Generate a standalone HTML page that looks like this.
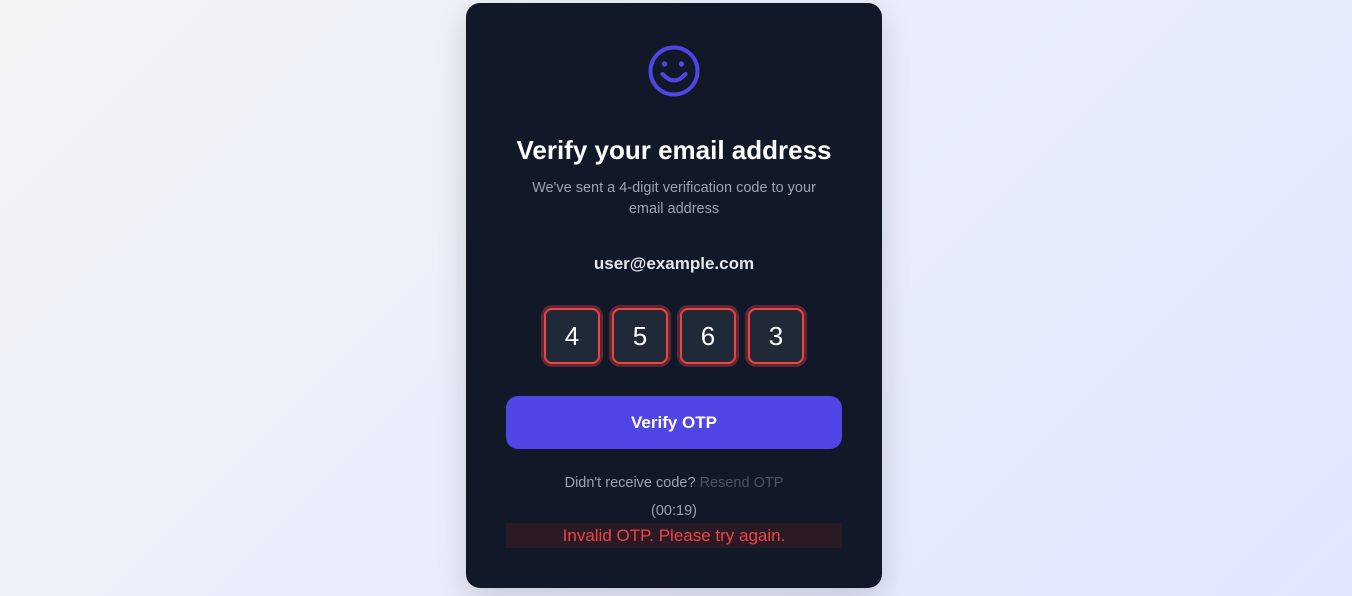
<!DOCTYPE html>
<html><head><style>
html,body{margin:0;padding:0}
body{width:1352px;height:596px;background:linear-gradient(135deg,#f3f4f6 0%,#e0e7ff 100%);font-family:"Liberation Sans",sans-serif;position:relative;overflow:hidden}
.card{position:absolute;left:466px;top:3px;width:416px;height:585px;background:#111827;border-radius:14px;box-shadow:0 10px 30px rgba(0,0,0,.15)}
.c{position:absolute;left:0;width:416px;text-align:center}
.box{position:absolute;top:308px;width:52px;height:52px;border:2px solid #ef4444;border-radius:8px;background:#1f2937;box-shadow:0 0 0 3px rgba(239,68,68,.35);color:#fff;font-size:26px;line-height:52px;text-align:center}
</style></head><body>
<div class="card">
<svg style="position:absolute;left:180px;top:40px" width="56" height="56" viewBox="0 0 56 56"><circle cx="28" cy="28" r="23.5" fill="none" stroke="#4f46e5" stroke-width="4"/><circle cx="18.5" cy="21" r="2.7" fill="#4f46e5"/><circle cx="35.5" cy="21" r="2.7" fill="#4f46e5"/><path d="M16.5 31q11.5 13 23 0" fill="none" stroke="#4f46e5" stroke-width="4" stroke-linecap="round"/></svg>
<div class="c" style="top:132px;font-size:26px;font-weight:bold;color:#fff">Verify your email address</div>
<div class="c" style="top:175px;font-size:14.5px;line-height:21px;color:#9ca3af;padding:0 48px;box-sizing:border-box">We've sent a 4-digit verification code to your email address</div>
<div class="c" style="top:251px;font-size:17px;font-weight:bold;color:#e5e7eb">user@example.com</div>
</div>
<div class="box" style="left:544px">4</div>
<div class="box" style="left:612px">5</div>
<div class="box" style="left:680px">6</div>
<div class="box" style="left:748px">3</div>
<div style="position:absolute;left:506px;top:396px;width:336px;height:53px;background:#4f46e5;border-radius:12px;color:#fff;font-weight:bold;font-size:17px;line-height:53px;text-align:center">Verify OTP</div>
<div style="position:absolute;left:466px;width:416px;top:475px;text-align:center;font-size:14.5px;color:#9ca3af">Didn't receive code? <span style="color:#4b5563">Resend OTP</span></div>
<div style="position:absolute;left:466px;width:416px;top:503px;text-align:center;font-size:14.5px;color:#9ca3af">(00:19)</div>
<div style="position:absolute;left:506px;top:523px;width:336px;height:25px;background:#2a1a25;color:#ef4444;font-size:17px;line-height:25px;text-align:center">Invalid OTP. Please try again.</div>
</body></html>
